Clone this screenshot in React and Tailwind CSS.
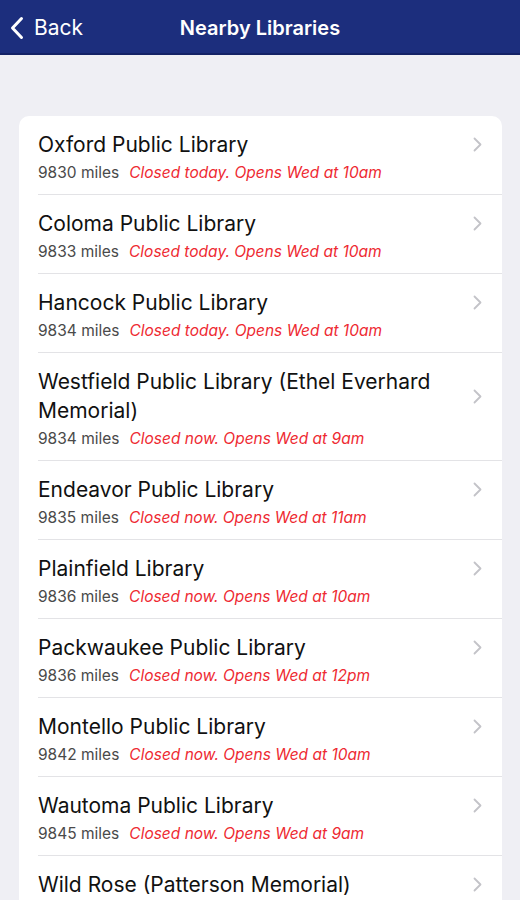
const LIBRARIES = [
  { name: "Oxford Public Library", miles: 9830, status: "Closed today. Opens Wed at 10am" },
  { name: "Coloma Public Library", miles: 9833, status: "Closed today. Opens Wed at 10am" },
  { name: "Hancock Public Library", miles: 9834, status: "Closed today. Opens Wed at 10am" },
  { name: "Westfield Public Library (Ethel Everhard Memorial)", miles: 9834, status: "Closed now. Opens Wed at 9am" },
  { name: "Endeavor Public Library", miles: 9835, status: "Closed now. Opens Wed at 11am" },
  { name: "Plainfield Library", miles: 9836, status: "Closed now. Opens Wed at 10am" },
  { name: "Packwaukee Public Library", miles: 9836, status: "Closed now. Opens Wed at 12pm" },
  { name: "Montello Public Library", miles: 9842, status: "Closed now. Opens Wed at 10am" },
  { name: "Wautoma Public Library", miles: 9845, status: "Closed now. Opens Wed at 9am" },
  { name: "Wild Rose (Patterson Memorial)", miles: 9846, status: "Closed now. Opens Wed at 10am" },
];

function Chevron({ className }) {
  return (
    <svg viewBox="0 0 9 15" className={className} fill="none" stroke="currentColor" strokeWidth="1.8" strokeLinecap="round" strokeLinejoin="round">
      <path d="M1.5 1.5 L7.5 7.5 L1.5 13.5" />
    </svg>
  );
}

function LibraryRow({ lib }) {
  return (
    <div className="pl-[19px]">
      <div className="border-b border-[#e3e3e6] pt-[14px] pb-[12px] pr-[20px]">
        {/* Title + chevron */}
        <div className="flex items-center">
          <div className="flex-1 pr-3 text-[21px] leading-[29px] text-[#111]">{lib.name}</div>
          <Chevron className="h-[15px] w-[9px] text-[#c3c3c8]" />
        </div>
        <div className="mt-[5px] flex gap-[10px] text-[15.5px] leading-[18px]">
          <span className="text-[#4a4a4a]">{lib.miles} miles</span>
          <span className="italic text-[#ee2a32]">{lib.status}</span>
        </div>
      </div>
    </div>
  );
}

export default function App() {
  return (
    <div className="h-[900px] overflow-hidden bg-[#efeff4]" style={{ fontFamily: "Inter, 'Liberation Sans', sans-serif" }}>
      {/* Nav bar */}
      <div className="relative flex h-[55px] items-center justify-center border-b-2 border-[#142266] bg-[#1c2e7d] pt-[3px]">
        <div className="absolute left-[10px] top-0 flex h-full items-center gap-[10px] pt-[3px] text-white">
          <svg viewBox="0 0 14 24" className="h-[24px] w-[14px]" fill="none" stroke="currentColor" strokeWidth="3" strokeLinecap="round" strokeLinejoin="round">
            <path d="M11.5 2.5 L2.5 12 L11.5 21.5" />
          </svg>
          <span className="text-[21px]">Back</span>
        </div>
        <h1 className="text-[20px] font-semibold text-white">Nearby Libraries</h1>
      </div>

      {/* List */}
      <div className="mt-[61px] ml-[19px] mr-[18px] overflow-hidden rounded-[10px] bg-white">
        {LIBRARIES.map((lib) => (
          <LibraryRow key={lib.name} lib={lib} />
        ))}
      </div>
    </div>
  );
}
